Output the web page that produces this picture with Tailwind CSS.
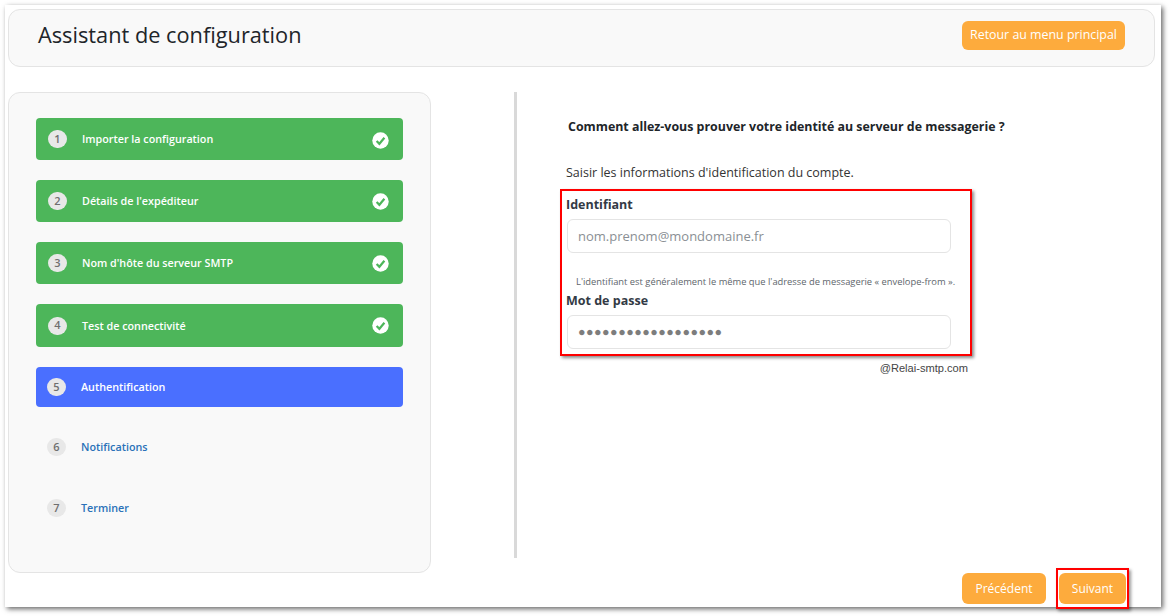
<!DOCTYPE html>
<html lang="fr">
<head>
  <meta charset="UTF-8">
  <title>Assistant de configuration</title>
  <script src="https://cdn.jsdelivr.net/npm/@tailwindcss/browser@4"></script>
</head>
<body class="bg-white h-[616px] w-[1170px] overflow-hidden font-['Open_Sans','Noto_Sans',sans-serif]">
  <div class="w-[1156px] h-[602px] ml-[5px] mt-[5px] pt-1 pl-[3px] bg-white shadow-[2px_2px_5px_rgba(0,0,0,0.6)] flex flex-col">
    <!-- Header -->
    <header class="w-[1147px] h-[58px] shrink-0 bg-[#f9f9f9] border border-[#e4e4e4] rounded-xl flex items-center justify-between pl-[29px] pr-[29px]">
      <h1 class="text-[21.75px] text-[#212529] leading-none -mt-[7px]">Assistant de configuration</h1>
      <button class="h-[29px] w-[163px] bg-[#fdab3d] rounded-md text-white text-[12.4px] -mt-[5px]">Retour au menu principal</button>
    </header>

    <div class="flex mt-[25px]">
      <!-- Sidebar -->
      <aside class="w-[423px] h-[481px] shrink-0 bg-[#f9f9f9] border border-[#e4e4e4] rounded-xl pl-[27px] pt-[25px] text-[10.75px] font-semibold">
        <div class="w-[367px] h-[42px] bg-[#4db65a] rounded flex items-center pl-3 pr-[14px] text-white">
          <span class="w-[19px] h-[18px] rounded-full bg-[#e8e8e8] text-[#6f6f6f] flex items-center justify-center text-[11px]">1</span>
          <span class="ml-[15px] flex-1">Importer la configuration</span>
          <svg class="mt-[2px]" width="17" height="17" viewBox="0 0 17 17"><circle cx="8.5" cy="8.5" r="8.2" fill="#fff"/><path d="M4.6 8.9l2.8 2.9 5-6" fill="none" stroke="#4db65a" stroke-width="2.2"/></svg>
        </div>
        <div class="w-[367px] h-[42px] mt-5 bg-[#4db65a] rounded flex items-center pl-3 pr-[14px] text-white">
          <span class="w-[19px] h-[18px] rounded-full bg-[#e8e8e8] text-[#6f6f6f] flex items-center justify-center text-[11px]">2</span>
          <span class="ml-[15px] flex-1 mt-px">Détails de l'expéditeur</span>
          <svg width="17" height="17" viewBox="0 0 17 17"><circle cx="8.5" cy="8.5" r="8.2" fill="#fff"/><path d="M4.6 8.9l2.8 2.9 5-6" fill="none" stroke="#4db65a" stroke-width="2.2"/></svg>
        </div>
        <div class="w-[367px] h-[42px] mt-5 bg-[#4db65a] rounded flex items-center pl-3 pr-[14px] text-white">
          <span class="w-[19px] h-[18px] rounded-full bg-[#e8e8e8] text-[#6f6f6f] flex items-center justify-center text-[11px]">3</span>
          <span class="ml-[15px] flex-1 mt-px">Nom d'hôte du serveur SMTP</span>
          <svg width="17" height="17" viewBox="0 0 17 17"><circle cx="8.5" cy="8.5" r="8.2" fill="#fff"/><path d="M4.6 8.9l2.8 2.9 5-6" fill="none" stroke="#4db65a" stroke-width="2.2"/></svg>
        </div>
        <div class="w-[367px] h-[43px] mt-5 bg-[#4db65a] rounded flex items-center pl-3 pr-[14px] text-white">
          <span class="w-[19px] h-[18px] rounded-full bg-[#e8e8e8] text-[#6f6f6f] flex items-center justify-center text-[11px]">4</span>
          <span class="ml-[15px] flex-1 mt-px">Test de connectivité</span>
          <svg width="17" height="17" viewBox="0 0 17 17"><circle cx="8.5" cy="8.5" r="8.2" fill="#fff"/><path d="M4.6 8.9l2.8 2.9 5-6" fill="none" stroke="#4db65a" stroke-width="2.2"/></svg>
        </div>
        <div class="w-[367px] h-10 mt-5 bg-[#4a6fff] rounded flex items-center pl-[11px] text-white">
          <span class="w-[19px] h-[18px] rounded-full bg-[#e8e8e8] text-[#6f6f6f] flex items-center justify-center text-[11px]">5</span>
          <span class="ml-[15px]">Authentification</span>
        </div>
        <div class="w-[367px] h-10 mt-5 flex items-center pl-[11px] text-[#2a71b8]">
          <span class="w-[19px] h-[18px] rounded-full bg-[#e8e8e8] text-[#6f6f6f] flex items-center justify-center text-[11px]">6</span>
          <span class="ml-[15px]">Notifications</span>
        </div>
        <div class="w-[367px] h-10 mt-[21px] flex items-center pl-[11px] text-[#2a71b8]">
          <span class="w-[19px] h-[18px] rounded-full bg-[#e8e8e8] text-[#6f6f6f] flex items-center justify-center text-[11px]">7</span>
          <span class="ml-[15px]">Terminer</span>
        </div>
      </aside>

      <!-- Divider -->
      <div class="w-[3px] h-[466px] ml-[83px] shrink-0 bg-[#d9d9d9]"></div>

      <!-- Main -->
      <main class="pl-[43px] flex flex-col w-[640px]">
        <h2 class="pl-[8px] mt-[26px] text-[12.4px] font-bold text-[#212529] leading-[18px]">Comment allez-vous prouver votre identité au serveur de messagerie ?</h2>
        <p class="pl-[6px] mt-[28px] text-[12.5px] text-[#333] leading-[18px]">Saisir les informations d'identification du compte.</p>
        <div class="w-[412px] h-[167px] mt-[7px] border-[2px] border-[#ff0000] shadow-[2px_2px_3px_rgba(0,0,0,0.45)] pl-[4px] pt-[5px]">
          <label class="block text-[12.5px] font-bold text-[#333a45] leading-[18px]">Identifiant</label>
          <div class="w-[384px] h-[34px] mt-[5px] ml-[1px] pt-px bg-white border border-[#e4e4e4] rounded-md flex items-center pl-[10px] text-[13px] text-[#8a8f94]">nom.prenom@mondomaine.fr</div>
          <p class="mt-[23px] ml-[10px] text-[9.35px] leading-[12px] text-[#60666c] whitespace-nowrap">L'identifiant est généralement le même que l'adresse de messagerie « envelope-from ».</p>
          <label class="block mt-[4px] text-[12.5px] font-bold text-[#333a45] leading-[18px]">Mot de passe</label>
          <div class="w-[384px] h-[34px] mt-[5px] ml-[1px] bg-white border border-[#e4e4e4] rounded-md flex items-center pl-[10px] text-[#7d7d7d] text-[12.5px] tracking-[0.48px]">●●●●●●●●●●●●●●●●●●</div>
        </div>
        <p class="w-[408px] mt-[5px] text-right text-[11.1px] text-[#444] font-['Liberation_Sans',sans-serif] leading-[14px]">@Relai-smtp.com</p>
        <div class="flex justify-end w-[569px] mt-[193px] items-center">
          <button class="w-[84px] h-[31px] bg-[#fdab3d] rounded-md text-white text-xs">Précédent</button>
          <div class="ml-[10px] w-[73px] h-[41px] border-[2px] border-[#ff0000] flex items-center justify-center shadow-[2px_2px_3px_rgba(0,0,0,0.4)]">
            <button class="w-[67px] h-[31px] bg-[#fdab3d] rounded-md text-white text-xs">Suivant</button>
          </div>
        </div>
      </main>
    </div>
  </div>
</body>
</html>
